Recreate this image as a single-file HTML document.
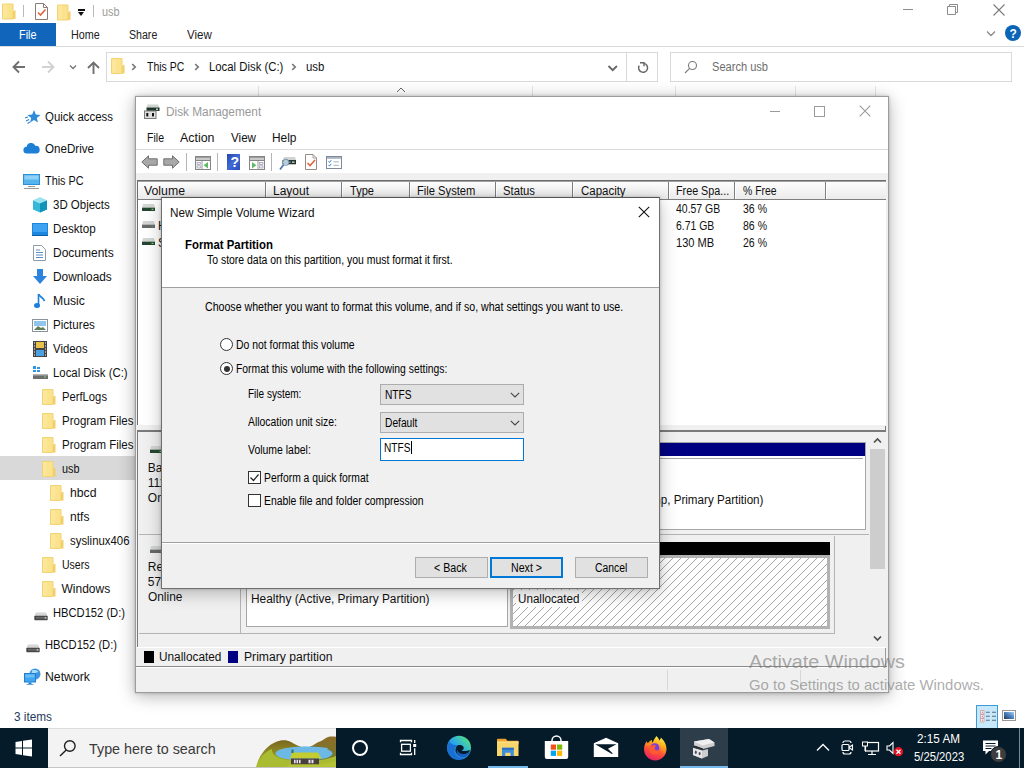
<!DOCTYPE html>
<html lang="en"><head><meta charset="utf-8"><title>usb</title>
<style>
html,body{margin:0;padding:0;width:1024px;height:768px;overflow:hidden;background:#fff;font-family:"Liberation Sans",sans-serif;}
.t{position:absolute;white-space:pre;line-height:1;}
.a{position:absolute;}
#explorer{position:absolute;left:0;top:0;width:1024px;height:728px;background:#fff;overflow:hidden;}

</style></head>
<body>
<div id="explorer">
<svg class="a" style="left:2px;top:3px" width="14" height="17" viewBox="0 0 14 16"><path d="M0.5 0.5h10.5v15h-10.5z" fill="#fbe28c" stroke="#f2d273" stroke-width="1"/><path d="M11 8l2.5 -1.5v9h-2.5z" fill="#f1cf6b"/><path d="M1 1h4v14h-4z" fill="#fde9a3" opacity=".6"/></svg>
<div class="a" style="left:23px;top:5px;width:1px;height:12px;background:#b9b9b9"></div>
<svg class="a" style="left:35px;top:3px" width="13" height="17" viewBox="0 0 13 17"><path d="M0.5 0.5h8l4 4v12h-12z" fill="#fff" stroke="#8c7b74"/><path d="M8.5 0.5v4h4" fill="none" stroke="#8c7b74"/><path d="M3 9.5l2.5 2.5l5-5.5" fill="none" stroke="#e0643c" stroke-width="1.6"/></svg>
<svg class="a" style="left:57px;top:4px" width="14" height="17" viewBox="0 0 14 16"><path d="M0.5 0.5h10.5v15h-10.5z" fill="#fbe28c" stroke="#f2d273" stroke-width="1"/><path d="M11 8l2.5 -1.5v9h-2.5z" fill="#f1cf6b"/><path d="M1 1h4v14h-4z" fill="#fde9a3" opacity=".6"/></svg>
<div class="a" style="left:78px;top:9px;width:7px;height:2px;background:#111"></div>
<div class="a" style="left:78px;top:12px;width:0;height:0;border-left:3.5px solid transparent;border-right:3.5px solid transparent;border-top:4px solid #111"></div>
<div class="a" style="left:93px;top:5px;width:1px;height:12px;background:#b9b9b9"></div>
<span class="t" style="left:101.9px;top:6.2px;font-size:12px;color:#9b9b9b;transform:scaleX(0.9040);transform-origin:0 0;">usb</span>
<div class="a" style="left:903px;top:9px;width:10px;height:1px;background:#8c8c8c"></div>
<svg class="a" style="left:947px;top:4px" width="12" height="12" viewBox="0 0 12 12"><path d="M0.5 2.5h8v8h-8z M2.5 2.5v-2h8v8h-2" fill="none" stroke="#8c8c8c"/></svg>
<svg class="a" style="left:993px;top:4px" width="12" height="12" viewBox="0 0 12 12"><path d="M0.5 0.5l11 11M11.5 0.5l-11 11" fill="none" stroke="#7a7a7a" stroke-width="1.1"/></svg>
<div class="a" style="left:0;top:23px;width:56px;height:23px;background:#1166bb"></div>
<span class="t" style="left:19.4px;top:29.2px;font-size:12px;color:#fff;transform:scaleX(0.9047);transform-origin:0 0;">File</span>
<span class="t" style="left:70.6px;top:29.2px;font-size:12px;color:#222;transform:scaleX(0.8996);transform-origin:0 0;">Home</span>
<span class="t" style="left:129.3px;top:29.2px;font-size:12px;color:#222;transform:scaleX(0.8835);transform-origin:0 0;">Share</span>
<span class="t" style="left:187.3px;top:29.2px;font-size:12px;color:#222;transform:scaleX(0.9614);transform-origin:0 0;">View</span>
<div class="a" style="left:0;top:46px;width:1024px;height:1px;background:#dadbdc"></div>
<svg class="a" style="left:986px;top:30px" width="10" height="7" viewBox="0 0 10 7"><path d="M1 1.5l4 4l4-4" fill="none" stroke="#8a8a8a" stroke-width="1.3"/></svg>
<div class="a" style="left:1005px;top:25px;width:16px;height:16px;border-radius:8px;background:#0a64b8"></div>
<span class="t" style="left:1009.5px;top:28.2px;font-size:12px;color:#fff;font-weight:700;">?</span>
<svg class="a" style="left:12px;top:60px" width="14" height="14" viewBox="0 0 14 14"><path d="M13 7H2M7 1.500L1.500 7L7 12.500" fill="none" stroke="#707070" stroke-width="1.900"/></svg>
<svg class="a" style="left:41px;top:60px" width="14" height="14" viewBox="0 0 14 14"><path d="M1 7H12M7 1.500L12.500 7L7 12.500" fill="none" stroke="#d2d2d2" stroke-width="1.900"/></svg>
<svg class="a" style="left:69px;top:64px" width="8" height="6" viewBox="0 0 8 6"><path d="M1 1.5l3 3l3-3" fill="none" stroke="#777" stroke-width="1.3"/></svg>
<svg class="a" style="left:87px;top:61px" width="13" height="14" viewBox="0 0 13 14"><path d="M6.500 13V2M1 7L6.500 1.500L12 7" fill="none" stroke="#707070" stroke-width="1.900"/></svg>
<div class="a" style="left:106px;top:52px;width:550px;height:28px;border:1px solid #d9d9d9;background:#fff"></div>
<svg class="a" style="left:111px;top:58px" width="14" height="16" viewBox="0 0 14 16"><path d="M0.5 0.5h10.5v15h-10.5z" fill="#fbe28c" stroke="#f2d273" stroke-width="1"/><path d="M11 8l2.5 -1.5v9h-2.5z" fill="#f1cf6b"/><path d="M1 1h4v14h-4z" fill="#fde9a3" opacity=".6"/></svg>
<svg class="a" style="left:130.5px;top:63px" width="6" height="8" viewBox="0 0 6 8"><path d="M1.200 1l3 3l-3 3" fill="none" stroke="#777" stroke-width="1.700"/></svg>
<svg class="a" style="left:193.5px;top:63px" width="6" height="8" viewBox="0 0 6 8"><path d="M1.200 1l3 3l-3 3" fill="none" stroke="#777" stroke-width="1.700"/></svg>
<svg class="a" style="left:291px;top:63px" width="6" height="8" viewBox="0 0 6 8"><path d="M1.200 1l3 3l-3 3" fill="none" stroke="#777" stroke-width="1.700"/></svg>
<span class="t" style="left:147.0px;top:61.2px;font-size:12px;color:#111;transform:scaleX(0.8738);transform-origin:0 0;">This PC</span>
<span class="t" style="left:208.5px;top:61.2px;font-size:12px;color:#111;transform:scaleX(0.9455);transform-origin:0 0;">Local Disk (C:)</span>
<span class="t" style="left:306.0px;top:61.2px;font-size:12px;color:#111;transform:scaleX(0.9504);transform-origin:0 0;">usb</span>
<svg class="a" style="left:607px;top:64px" width="12" height="8" viewBox="0 0 12 8"><path d="M1.500 2l4.200 4.200l4.200-4.200" fill="none" stroke="#666" stroke-width="1.800"/></svg>
<div class="a" style="left:626px;top:53px;width:1px;height:28px;background:#d9d9d9"></div>
<svg class="a" style="left:636px;top:60px" width="14" height="14" viewBox="0 0 14 14"><path d="M7.840 3.370A4.500 4.500 0 1 1 3.160 5.550" fill="none" stroke="#666" stroke-width="1.500"/><path d="M4 2.700H8V6.200" fill="none" stroke="#666" stroke-width="1.400"/></svg>
<div class="a" style="left:670px;top:52px;width:340px;height:28px;border:1px solid #d9d9d9;background:#fff"></div>
<svg class="a" style="left:684px;top:60px" width="14" height="14" viewBox="0 0 14 14"><circle cx="8.5" cy="5.5" r="4" fill="none" stroke="#7a7a7a" stroke-width="1.1"/><path d="M5.6 8.4L1 13" stroke="#7a7a7a" stroke-width="1.1"/></svg>
<span class="t" style="left:711.6px;top:61.2px;font-size:12px;color:#6d6d6d;transform:scaleX(0.9225);transform-origin:0 0;">Search usb</span>
<div class="a" style="left:258px;top:86px;width:1px;height:12px;background:#e5e5e5"></div>
<div class="a" style="left:532px;top:86px;width:1px;height:12px;background:#e5e5e5"></div>
<div class="a" style="left:675px;top:86px;width:1px;height:12px;background:#e5e5e5"></div>
<div class="a" style="left:795px;top:86px;width:1px;height:12px;background:#e5e5e5"></div>
<div class="a" style="left:875px;top:86px;width:1px;height:12px;background:#e5e5e5"></div>
<svg class="a" style="left:396px;top:87px" width="10" height="6" viewBox="0 0 10 6"><path d="M1 5l4-4l4 4" fill="none" stroke="#666" stroke-width="1"/></svg>
<div class="a" style="left:0;top:456px;width:136px;height:24px;background:#d9d9d9"></div>
<span class="t" style="left:45.0px;top:111.2px;font-size:12px;color:#111;transform:scaleX(0.9529);transform-origin:0 0;">Quick access</span>
<svg class="a" style="left:25px;top:109px" width="16" height="16" viewBox="0 0 16 16"><path d="M9 1l1.8 4.6l4.7.3l-3.7 3l1.2 4.7L9 11l-4 2.6l1.2-4.7l-3.7-3l4.7-.3z" fill="#2f8ad8"/><path d="M0 9l3-1M1 12l3-1.5M2.5 14.5l2.5-1.5" stroke="#2f8ad8" stroke-width="1.2"/></svg>
<span class="t" style="left:45.0px;top:143.2px;font-size:12px;color:#111;transform:scaleX(0.9667);transform-origin:0 0;">OneDrive</span>
<svg class="a" style="left:23px;top:143px" width="17" height="11" viewBox="0 0 17 11"><path d="M4 10.5a3.4 3.4 0 0 1-.4-6.8A4.6 4.6 0 0 1 12.300 2.700A3.900 3.900 0 0 1 13.200 10.500z" fill="#1e7fd6"/></svg>
<span class="t" style="left:45.0px;top:175.2px;font-size:12px;color:#111;transform:scaleX(0.9042);transform-origin:0 0;">This PC</span>
<svg class="a" style="left:23px;top:174px" width="17" height="15" viewBox="0 0 17 15"><rect x=".5" y=".5" width="16" height="10" fill="#55b4ee" stroke="#2d8fd4"/><rect x="1.500" y="1.500" width="14" height="4" fill="#8fd0f6"/><rect x="5" y="12" width="7" height="1" fill="#9a9a9a"/><rect x="1" y="14" width="15" height="1" fill="#9a9a9a"/></svg>
<span class="t" style="left:53.0px;top:199.2px;font-size:12px;color:#111;transform:scaleX(0.9569);transform-origin:0 0;">3D Objects</span>
<svg class="a" style="left:32px;top:197px" width="16" height="16" viewBox="0 0 16 16"><path d="M8 0.500l7 3v9l-7 3l-7-3v-9z" fill="#35b8d8"/><path d="M8 0.500l7 3l-7 3l-7-3z" fill="#9be4ef"/><path d="M8 6.500l7-3v9l-7 3z" fill="#1493b8"/></svg>
<span class="t" style="left:53.0px;top:223.2px;font-size:12px;color:#111;transform:scaleX(0.9698);transform-origin:0 0;">Desktop</span>
<svg class="a" style="left:32px;top:223px" width="16" height="13" viewBox="0 0 16 13"><rect x="0" y="0" width="16" height="12" fill="#1a86de"/><rect x="1" y="1" width="14" height="8" fill="#3ea2f0"/><rect x="0" y="12" width="16" height="1" fill="#0c5fa8"/></svg>
<span class="t" style="left:53.0px;top:247.2px;font-size:12px;color:#111;">Documents</span>
<svg class="a" style="left:33px;top:245px" width="13" height="16" viewBox="0 0 13 16"><path d="M.5.500h8l4 4v11h-12z" fill="#fff" stroke="#8e9aa6"/><path d="M3 5h4M3 7.500h7M3 10h7M3 12.500h7" stroke="#5b8fc4" stroke-width="1"/></svg>
<span class="t" style="left:53.0px;top:271.2px;font-size:12px;color:#111;transform:scaleX(0.9903);transform-origin:0 0;">Downloads</span>
<svg class="a" style="left:32px;top:269px" width="16" height="16" viewBox="0 0 16 16"><path d="M5 0h6v7h4l-7 8l-7-8h4z" fill="#2c84dc"/></svg>
<span class="t" style="left:53.0px;top:295.2px;font-size:12px;color:#111;transform:scaleX(1.0146);transform-origin:0 0;">Music</span>
<svg class="a" style="left:34px;top:293px" width="12" height="16" viewBox="0 0 12 16"><path d="M4.500 1v11" stroke="#1d7fd8" stroke-width="1.600"/><path d="M4.500 1c1 3 5 3 6 7" fill="none" stroke="#1d7fd8" stroke-width="1.800"/><ellipse cx="3" cy="12.500" rx="3" ry="2.500" fill="#1d7fd8"/></svg>
<span class="t" style="left:53.0px;top:319.2px;font-size:12px;color:#111;transform:scaleX(0.9663);transform-origin:0 0;">Pictures</span>
<svg class="a" style="left:32px;top:319px" width="16" height="13" viewBox="0 0 16 13"><rect x=".5" y=".5" width="15" height="12" fill="#fff" stroke="#8a949e"/><rect x="2" y="2" width="12" height="5" fill="#8fc6ee"/><path d="M2 11l4-4l3 2l2-1l3 3z" fill="#5c7f5a"/></svg>
<span class="t" style="left:53.0px;top:343.2px;font-size:12px;color:#111;transform:scaleX(0.9484);transform-origin:0 0;">Videos</span>
<svg class="a" style="left:33px;top:341px" width="14" height="16" viewBox="0 0 14 16"><rect x="0" y="0" width="14" height="16" fill="#444"/><rect x="3" y="1" width="8" height="6" fill="#e8c04a"/><rect x="3" y="9" width="8" height="6" fill="#4aa0e0"/><path d="M1 2h1M1 5h1M1 8h1M1 11h1M1 14h1M12 2h1M12 5h1M12 8h1M12 11h1M12 14h1" stroke="#fff"/></svg>
<span class="t" style="left:53.0px;top:367.2px;font-size:12px;color:#111;transform:scaleX(0.9481);transform-origin:0 0;">Local Disk (C:)</span>
<svg class="a" style="left:32px;top:366px" width="16" height="14" viewBox="0 0 16 14"><path d="M1 0h3v3h-3zM5 1h3v2h-3zM1 4h3v2h-3zM5 4h3v2h-3z" fill="#2f96e6"/><rect x="1" y="8" width="15" height="5" fill="#6d6d6d"/><rect x="1" y="8" width="15" height="1.500" fill="#b5b5b5"/><rect x="12" y="10.500" width="2" height="1" fill="#6fe06f"/></svg>
<span class="t" style="left:61.5px;top:391.2px;font-size:12px;color:#111;transform:scaleX(0.9369);transform-origin:0 0;">PerfLogs</span>
<svg class="a" style="left:42.0px;top:389px" width="14" height="16" viewBox="0 0 14 16"><path d="M0.5 0.5h10.5v15h-10.5z" fill="#fbe28c" stroke="#f2d273" stroke-width="1"/><path d="M11 8l2.5 -1.5v9h-2.5z" fill="#f1cf6b"/><path d="M1 1h4v14h-4z" fill="#fde9a3" opacity=".6"/></svg>
<span class="t" style="left:61.5px;top:415.2px;font-size:12px;color:#111;transform:scaleX(0.9573);transform-origin:0 0;">Program Files</span>
<svg class="a" style="left:42.0px;top:413px" width="14" height="16" viewBox="0 0 14 16"><path d="M0.5 0.5h10.5v15h-10.5z" fill="#fbe28c" stroke="#f2d273" stroke-width="1"/><path d="M11 8l2.5 -1.5v9h-2.5z" fill="#f1cf6b"/><path d="M1 1h4v14h-4z" fill="#fde9a3" opacity=".6"/></svg>
<span class="t" style="left:61.5px;top:439.2px;font-size:12px;color:#111;transform:scaleX(0.9573);transform-origin:0 0;">Program Files</span>
<svg class="a" style="left:42.0px;top:437px" width="14" height="16" viewBox="0 0 14 16"><path d="M0.5 0.5h10.5v15h-10.5z" fill="#fbe28c" stroke="#f2d273" stroke-width="1"/><path d="M11 8l2.5 -1.5v9h-2.5z" fill="#f1cf6b"/><path d="M1 1h4v14h-4z" fill="#fde9a3" opacity=".6"/></svg>
<span class="t" style="left:61.5px;top:463.2px;font-size:12px;color:#111;transform:scaleX(0.9040);transform-origin:0 0;">usb</span>
<svg class="a" style="left:42.0px;top:461px" width="14" height="16" viewBox="0 0 14 16"><path d="M0.5 0.5h10.5v15h-10.5z" fill="#fbe28c" stroke="#f2d273" stroke-width="1"/><path d="M11 8l2.5 -1.5v9h-2.5z" fill="#f1cf6b"/><path d="M1 1h4v14h-4z" fill="#fde9a3" opacity=".6"/></svg>
<span class="t" style="left:69.5px;top:487.2px;font-size:12px;color:#111;transform:scaleX(1.0180);transform-origin:0 0;">hbcd</span>
<svg class="a" style="left:50.0px;top:485px" width="14" height="16" viewBox="0 0 14 16"><path d="M0.5 0.5h10.5v15h-10.5z" fill="#fbe28c" stroke="#f2d273" stroke-width="1"/><path d="M11 8l2.5 -1.5v9h-2.5z" fill="#f1cf6b"/><path d="M1 1h4v14h-4z" fill="#fde9a3" opacity=".6"/></svg>
<span class="t" style="left:69.5px;top:511.2px;font-size:12px;color:#111;transform:scaleX(1.0081);transform-origin:0 0;">ntfs</span>
<svg class="a" style="left:50.0px;top:509px" width="14" height="16" viewBox="0 0 14 16"><path d="M0.5 0.5h10.5v15h-10.5z" fill="#fbe28c" stroke="#f2d273" stroke-width="1"/><path d="M11 8l2.5 -1.5v9h-2.5z" fill="#f1cf6b"/><path d="M1 1h4v14h-4z" fill="#fde9a3" opacity=".6"/></svg>
<span class="t" style="left:69.5px;top:535.2px;font-size:12px;color:#111;transform:scaleX(0.9489);transform-origin:0 0;">syslinux406</span>
<svg class="a" style="left:50.0px;top:533px" width="14" height="16" viewBox="0 0 14 16"><path d="M0.5 0.5h10.5v15h-10.5z" fill="#fbe28c" stroke="#f2d273" stroke-width="1"/><path d="M11 8l2.5 -1.5v9h-2.5z" fill="#f1cf6b"/><path d="M1 1h4v14h-4z" fill="#fde9a3" opacity=".6"/></svg>
<span class="t" style="left:61.5px;top:559.2px;font-size:12px;color:#111;transform:scaleX(0.8774);transform-origin:0 0;">Users</span>
<svg class="a" style="left:42.0px;top:557px" width="14" height="16" viewBox="0 0 14 16"><path d="M0.5 0.5h10.5v15h-10.5z" fill="#fbe28c" stroke="#f2d273" stroke-width="1"/><path d="M11 8l2.5 -1.5v9h-2.5z" fill="#f1cf6b"/><path d="M1 1h4v14h-4z" fill="#fde9a3" opacity=".6"/></svg>
<span class="t" style="left:61.5px;top:583.2px;font-size:12px;color:#111;">Windows</span>
<svg class="a" style="left:42.0px;top:581px" width="14" height="16" viewBox="0 0 14 16"><path d="M0.5 0.5h10.5v15h-10.5z" fill="#fbe28c" stroke="#f2d273" stroke-width="1"/><path d="M11 8l2.5 -1.5v9h-2.5z" fill="#f1cf6b"/><path d="M1 1h4v14h-4z" fill="#fde9a3" opacity=".6"/></svg>
<span class="t" style="left:53.0px;top:607.2px;font-size:12px;color:#111;transform:scaleX(0.9307);transform-origin:0 0;">HBCD152 (D:)</span>
<svg class="a" style="left:33.5px;top:611.5px" width="14" height="9" viewBox="0 0 14 9"><path d="M2 .5h10l1.500 3.500h-13z" fill="#d6d6d6"/><rect x=".3" y="3.800" width="13.400" height="4.400" rx=".8" fill="#484848"/><rect x="2" y="5.500" width="8" height=".8" fill="#8a8a8a"/><rect x="10.500" y="5.300" width="2" height="1.200" fill="#f0f0f0"/></svg>
<span class="t" style="left:45.0px;top:639.2px;font-size:12px;color:#111;transform:scaleX(0.9307);transform-origin:0 0;">HBCD152 (D:)</span>
<svg class="a" style="left:25.5px;top:643.5px" width="14" height="9" viewBox="0 0 14 9"><path d="M2 .5h10l1.500 3.500h-13z" fill="#d6d6d6"/><rect x=".3" y="3.800" width="13.400" height="4.400" rx=".8" fill="#484848"/><rect x="2" y="5.500" width="8" height=".8" fill="#8a8a8a"/><rect x="10.500" y="5.300" width="2" height="1.200" fill="#f0f0f0"/></svg>
<span class="t" style="left:45.0px;top:671.2px;font-size:12px;color:#111;transform:scaleX(1.0224);transform-origin:0 0;">Network</span>
<svg class="a" style="left:24px;top:668px" width="17" height="18" viewBox="0 0 17 18"><circle cx="11" cy="6" r="5.500" fill="#3f95e0"/><path d="M8 2.500c2-1 5-.5 6.500 1.500c-2 0-3 1-3.500 2.500c-1-.5-2.500-.5-3.500 0z" fill="#a8dcf8"/><rect x=".5" y="5.500" width="11" height="8.500" fill="#42a5f0" stroke="#1e7fd0"/><rect x="1.500" y="6.500" width="9" height="3" fill="#6cc0fa"/><rect x="4.500" y="14.500" width="3" height="1.500" fill="#1e7fd0"/><rect x="2.500" y="16" width="7" height="1" fill="#6aa8d8"/></svg>
<span class="t" style="left:14.0px;top:711.2px;font-size:12px;color:#1e395b;transform:scaleX(0.9822);transform-origin:0 0;">3 items</span>
<div class="a" style="left:976px;top:705px;width:20px;height:24px;border:1px solid #3d9bd9;background:#c7e7fb"></div>
<svg class="a" style="left:980px;top:710px" width="17" height="13" viewBox="0 0 17 13"><path d="M.5.500h3.500v3.500H.5zM.5 4.500h3.500v3.500H.5zM.5 8.500h3.500v3.500H.5z" fill="#fff" stroke="#c98a90" stroke-width=".7"/><path d="M1.800 2.200h1M1.800 6.200h1" stroke="#556" stroke-width="1"/><path d="M1.800 10.200h1" stroke="#c03030" stroke-width="1"/><path d="M6 2.200h3.700M12 2.200h4M6 6.200h3.700M12 6.200h4M6 10.200h3.700M12 10.200h4" stroke="#5b6b7a" stroke-width="1.100"/></svg>
<svg class="a" style="left:1002px;top:710px" width="14" height="11" viewBox="0 0 14 11"><linearGradient id="tg" x1="0" y1="1" x2="1" y2="0"><stop offset="0" stop-color="#233a5c"/><stop offset=".55" stop-color="#4f86c4"/><stop offset="1" stop-color="#a9d0f2"/></linearGradient><rect x=".5" y=".5" width="13" height="10" fill="#fff" stroke="#9d9494"/><rect x="2" y="2" width="10" height="7" fill="url(#tg)"/></svg>
</div><div id="dm" class="a" style="left:135px;top:96px;width:752px;height:595px;border:1px solid #9c9c9c;background:#f0f0f0;box-shadow:0 0 3px rgba(0,0,0,.22),0 3px 16px rgba(0,0,0,.3)"></div>
<div class="a" style="left:136px;top:97px;width:752px;height:76px;background:#fff"></div>
<div class="a" style="left:136px;top:149px;width:752px;height:1px;background:#dcdcdc"></div>
<svg class="a" style="left:144px;top:104px" width="16" height="15" viewBox="0 0 16 15"><path d="M3.500.5h10.500l1.500 3h-13z" fill="#cdd5d0"/><rect x="2.500" y="3.500" width="13" height="3.400" fill="#22332c"/><rect x="12" y="4.600" width="2" height="1.200" fill="#d8f0e0"/><rect x=".5" y="7" width="11.500" height="7.500" fill="#dedede" stroke="#7a7a7a"/><rect x="2.300" y="9" width="2" height="3.400" fill="#111"/><rect x="8" y="9" width="2" height="3.400" fill="#111"/></svg>
<span class="t" style="left:165.9px;top:106.2px;font-size:12px;color:#999;transform:scaleX(0.9843);transform-origin:0 0;">Disk Management</span>
<div class="a" style="left:770px;top:111px;width:10px;height:1px;background:#9a9a9a"></div>
<div class="a" style="left:814px;top:106px;width:9px;height:9px;border:1px solid #9a9a9a"></div>
<svg class="a" style="left:859px;top:105px" width="12" height="12" viewBox="0 0 12 12"><path d="M.7.700l10.600 10.600M11.300.700L.7 11.300" fill="none" stroke="#9a9a9a" stroke-width="1.100"/></svg>
<span class="t" style="left:146.5px;top:132.2px;font-size:12px;color:#111;transform:scaleX(0.8788);transform-origin:0 0;">File</span>
<span class="t" style="left:180.0px;top:132.2px;font-size:12px;color:#111;transform:scaleX(1.0342);transform-origin:0 0;">Action</span>
<span class="t" style="left:231.0px;top:132.2px;font-size:12px;color:#111;transform:scaleX(0.9691);transform-origin:0 0;">View</span>
<span class="t" style="left:272.0px;top:132.2px;font-size:12px;color:#111;transform:scaleX(0.9924);transform-origin:0 0;">Help</span>
<svg class="a" style="left:141px;top:155px" width="17" height="14" viewBox="0 0 17 14"><path d="M0.800 7L7.500.8v3h8.700v6.400h-8.700v3z" fill="#a8a8a8" stroke="#6f6f6f" stroke-width="1"/></svg>
<svg class="a" style="left:163px;top:155px" width="17" height="14" viewBox="0 0 17 14"><path d="M16.200 7L9.500.8v3h-8.700v6.400h8.700v3z" fill="#a8a8a8" stroke="#6f6f6f" stroke-width="1"/></svg>
<div class="a" style="left:186px;top:153px;width:1px;height:18px;background:#b5b5b5"></div>
<div class="a" style="left:217px;top:153px;width:1px;height:18px;background:#b5b5b5"></div>
<div class="a" style="left:271px;top:153px;width:1px;height:18px;background:#b5b5b5"></div>
<svg class="a" style="left:195px;top:156px" width="16" height="14" viewBox="0 0 16 14"><rect x=".5" y=".5" width="15" height="13" fill="#fff" stroke="#858585"/><rect x="1" y="1" width="14" height="1.500" fill="#9c9c9c"/><rect x="1" y="2.500" width="14" height="1.500" fill="#c9c9c9"/><path d="M1 4.500h14" stroke="#858585"/><path d="M7 5v8.500" stroke="#9a9a9a"/><rect x="2" y="6.300" width="3.500" height="2.200" fill="#eef" stroke="#8d8d9a" stroke-width=".6"/><rect x="2" y="9.800" width="3.500" height="2.200" fill="#eef" stroke="#8d8d9a" stroke-width=".6"/><path d="M13 6v6.500l-4.500-3.250z" fill="#63b866"/></svg>
<svg class="a" style="left:227px;top:154px" width="13" height="16" viewBox="0 0 13 16"><linearGradient id="hg" x1="0" y1="0" x2="1" y2="1"><stop offset="0" stop-color="#2747a8"/><stop offset=".5" stop-color="#3f6ad8"/><stop offset="1" stop-color="#2a4db8"/></linearGradient><rect x="0" y="0" width="13" height="16" fill="url(#hg)"/></svg>
<span class="t" style="left:230.4px;top:155.1px;font-size:14px;color:#fff;font-weight:700;">?</span>
<svg class="a" style="left:249px;top:156px" width="16" height="14" viewBox="0 0 16 14"><rect x=".5" y=".5" width="15" height="13" fill="#fff" stroke="#858585"/><rect x="1" y="1" width="14" height="1.500" fill="#9c9c9c"/><rect x="1" y="2.500" width="14" height="1.500" fill="#c9c9c9"/><path d="M1 4.500h14" stroke="#858585"/><path d="M9 5v8.500" stroke="#9a9a9a"/><rect x="10.500" y="6.300" width="3.500" height="2.200" fill="#eef" stroke="#8d8d9a" stroke-width=".6"/><rect x="10.500" y="9.800" width="3.500" height="2.200" fill="#eef" stroke="#8d8d9a" stroke-width=".6"/><path d="M3 6v6.500l4.500-3.250z" fill="#63b866"/></svg>
<svg class="a" style="left:279px;top:156px" width="17" height="15" viewBox="0 0 17 15"><path d="M5 1h11l1 3h-13z" fill="#cfd3d1"/><rect x="3.500" y="4" width="13.500" height="4.300" fill="#27352e"/><rect x="9" y="5.500" width="3" height="1.300" fill="#6a8a9a"/><rect x="13" y="5.500" width="2.500" height="1.300" fill="#bfe8c8"/><circle cx="6.800" cy="6.300" r="3.100" fill="#cfe6f7" fill-opacity=".85" stroke="#6a8aac" stroke-width=".9"/><path d="M4.600 8.700L1 13.500" stroke="#4a76b0" stroke-width="1.700"/></svg>
<svg class="a" style="left:305px;top:154px" width="12" height="16" viewBox="0 0 12 16"><path d="M.5.500h7.500l3.500 3.500v11.500h-11z" fill="#fff" stroke="#9a8a84"/><path d="M8 .5v3.500h3.500" fill="none" stroke="#9a8a84" stroke-width=".8"/><path d="M2.500 9l2.500 2.500l5-5.500" fill="none" stroke="#e0643c" stroke-width="1.600"/></svg>
<svg class="a" style="left:326px;top:156px" width="16" height="13" viewBox="0 0 16 13"><rect x=".5" y=".5" width="15" height="12" fill="#fff" stroke="#7f8a96"/><rect x="1" y="1" width="14" height="1.800" fill="#a9b4c0"/><path d="M2.500 5.300l1 1.200l1.700-2.300M2.500 8.900l1 1.200l1.700-2.300" fill="none" stroke="#2f7fd0" stroke-width="1"/><path d="M7.500 5.800h5.500M7.500 9.300h5.500" stroke="#aab4be"/></svg>
<div class="a" style="left:137px;top:180px;width:749px;height:245px;background:#fff;border-top:1px solid #6d6d6d;border-left:1px solid #6d6d6d;box-sizing:border-box"></div>
<div class="a" style="left:138px;top:181px;width:748px;height:19px;background:linear-gradient(#fdfdfd,#ebebeb);border-top:1px solid #a0a0a0;border-bottom:1px solid #7e7e7e;box-sizing:border-box"></div>
<div class="a" style="left:265px;top:182px;width:1px;height:17px;background:#7e7e7e;border-right:1px solid #fff"></div>
<div class="a" style="left:341px;top:182px;width:1px;height:17px;background:#7e7e7e;border-right:1px solid #fff"></div>
<div class="a" style="left:409px;top:182px;width:1px;height:17px;background:#7e7e7e;border-right:1px solid #fff"></div>
<div class="a" style="left:495px;top:182px;width:1px;height:17px;background:#7e7e7e;border-right:1px solid #fff"></div>
<div class="a" style="left:572px;top:182px;width:1px;height:17px;background:#7e7e7e;border-right:1px solid #fff"></div>
<div class="a" style="left:668px;top:182px;width:1px;height:17px;background:#7e7e7e;border-right:1px solid #fff"></div>
<div class="a" style="left:734px;top:182px;width:1px;height:17px;background:#7e7e7e;border-right:1px solid #fff"></div>
<div class="a" style="left:825px;top:182px;width:1px;height:17px;background:#7e7e7e;border-right:1px solid #fff"></div>
<span class="t" style="left:144.0px;top:185.2px;font-size:12px;color:#111;transform:scaleX(1.0242);transform-origin:0 0;">Volume</span>
<span class="t" style="left:273.0px;top:185.2px;font-size:12px;color:#111;">Layout</span>
<span class="t" style="left:350.0px;top:185.2px;font-size:12px;color:#111;transform:scaleX(0.9225);transform-origin:0 0;">Type</span>
<span class="t" style="left:417.2px;top:185.2px;font-size:12px;color:#111;transform:scaleX(0.9316);transform-origin:0 0;">File System</span>
<span class="t" style="left:503.0px;top:185.2px;font-size:12px;color:#111;transform:scaleX(0.9403);transform-origin:0 0;">Status</span>
<span class="t" style="left:581.0px;top:185.2px;font-size:12px;color:#111;transform:scaleX(0.9553);transform-origin:0 0;">Capacity</span>
<span class="t" style="left:676.2px;top:185.2px;font-size:12px;color:#111;transform:scaleX(0.8960);transform-origin:0 0;">Free Spa...</span>
<span class="t" style="left:743.4px;top:185.2px;font-size:12px;color:#111;transform:scaleX(0.8659);transform-origin:0 0;">% Free</span>
<svg class="a" style="left:142px;top:204px" width="13" height="7" viewBox="0 0 13 7"><path d="M1 0h11l1 4h-13z" fill="#d3d6d3"/><rect x="0" y="3.700" width="13" height="3.300" fill="#24472f"/><rect x="9.500" y="4.800" width="2" height="1" fill="#8fe89a"/></svg>
<span class="t" style="left:158.0px;top:203.2px;font-size:12px;color:#111;">  (C:)</span>
<span class="t" style="left:676.2px;top:203.2px;font-size:12px;color:#111;transform:scaleX(0.8717);transform-origin:0 0;">40.57 GB</span>
<span class="t" style="left:742.8px;top:203.2px;font-size:12px;color:#111;transform:scaleX(0.8772);transform-origin:0 0;">36 %</span>
<svg class="a" style="left:142px;top:221px" width="13" height="7" viewBox="0 0 13 7"><path d="M1 0h11l1 4h-13z" fill="#d3d6d3"/><rect x="0" y="3.700" width="13" height="3.300" fill="#666a68"/><rect x="9.500" y="4.800" width="2" height="1" fill="#888"/></svg>
<span class="t" style="left:158.0px;top:220.2px;font-size:12px;color:#111;">HBCD152 (D:)</span>
<span class="t" style="left:676.2px;top:220.2px;font-size:12px;color:#111;transform:scaleX(0.8676);transform-origin:0 0;">6.71 GB</span>
<span class="t" style="left:742.8px;top:220.2px;font-size:12px;color:#111;transform:scaleX(0.8772);transform-origin:0 0;">86 %</span>
<svg class="a" style="left:142px;top:238px" width="13" height="7" viewBox="0 0 13 7"><path d="M1 0h11l1 4h-13z" fill="#d3d6d3"/><rect x="0" y="3.700" width="13" height="3.300" fill="#24472f"/><rect x="9.500" y="4.800" width="2" height="1" fill="#8fe89a"/></svg>
<span class="t" style="left:158.0px;top:237.2px;font-size:12px;color:#111;">System Reserved</span>
<span class="t" style="left:676.2px;top:237.2px;font-size:12px;color:#111;transform:scaleX(0.9236);transform-origin:0 0;">130 MB</span>
<span class="t" style="left:742.8px;top:237.2px;font-size:12px;color:#111;transform:scaleX(0.8772);transform-origin:0 0;">26 %</span>
<div class="a" style="left:137px;top:430px;width:749px;height:2px;background:#7a7a7a"></div>
<div class="a" style="left:885px;top:426px;width:1px;height:5px;background:#7a7a7a"></div>
<div class="a" style="left:137px;top:430px;width:1px;height:217px;background:#7a7a7a"></div>
<div class="a" style="left:139px;top:434px;width:101px;height:100px;border-right:1px solid #b4b4b4;border-bottom:1px solid #b4b4b4;background:#f0f0f0"></div>
<svg class="a" style="left:150px;top:446px" width="13" height="7" viewBox="0 0 13 7"><path d="M1 0h11l1 4h-13z" fill="#d3d6d3"/><rect x="0" y="3.700" width="13" height="3.300" fill="#24472f"/><rect x="9.500" y="4.800" width="2" height="1" fill="#8fe89a"/></svg>
<span class="t" style="left:147.8px;top:462.2px;font-size:12px;color:#111;">Basic</span>
<span class="t" style="left:147.8px;top:477.2px;font-size:12px;color:#111;">111.79 GB</span>
<span class="t" style="left:147.8px;top:492.2px;font-size:12px;color:#111;">Online</span>
<div class="a" style="left:246px;top:442px;width:620px;height:88px;background:#fff;border:1px solid #a6a6a6;box-sizing:border-box"></div>
<div class="a" style="left:246px;top:443px;width:619px;height:13px;background:#000082"></div>
<div class="a" style="left:247px;top:458px;width:616px;height:1px;background:#a6a6a6"></div>
<span class="t" style="left:460.2px;top:494.2px;font-size:12px;color:#111;transform:scaleX(0.9688);transform-origin:100% 0;">Healthy (Boot, Page File, Crash Dump, Primary Partition)</span>
<div class="a" style="left:139px;top:534px;width:730px;height:1px;background:#b4b4b4"></div>
<div class="a" style="left:139px;top:536px;width:101px;height:97px;border-right:1px solid #b4b4b4;border-bottom:1px solid #b4b4b4;background:#f0f0f0"></div>
<svg class="a" style="left:150px;top:545.5px" width="13" height="7" viewBox="0 0 13 7"><path d="M1 0h11l1 4h-13z" fill="#d3d6d3"/><rect x="0" y="3.700" width="13" height="3.300" fill="#666a68"/><rect x="9.500" y="4.800" width="2" height="1" fill="#888"/></svg>
<span class="t" style="left:147.8px;top:561.2px;font-size:12px;color:#111;">Removable</span>
<span class="t" style="left:147.8px;top:576.2px;font-size:12px;color:#111;">57.30 GB</span>
<span class="t" style="left:147.8px;top:591.2px;font-size:12px;color:#111;transform:scaleX(0.9917);transform-origin:0 0;">Online</span>
<div class="a" style="left:241px;top:536px;width:594px;height:98px;border-right:1px solid #b4b4b4;border-bottom:1px solid #b4b4b4;box-sizing:border-box"></div>
<div class="a" style="left:246px;top:542px;width:262px;height:85px;background:#fff;border:1px solid #a6a6a6;box-sizing:border-box"></div>
<div class="a" style="left:246px;top:542px;width:262px;height:13px;background:#000082"></div>
<span class="t" style="left:250.6px;top:593.2px;font-size:12px;color:#111;transform:scaleX(0.9914);transform-origin:0 0;">Healthy (Active, Primary Partition)</span>
<div class="a" style="left:510px;top:542px;width:320px;height:13px;background:#000"></div>
<div class="a" style="left:510px;top:555px;width:320px;height:74px;background:#b2b2b2"></div>
<svg class="a" style="left:513px;top:558px" width="314" height="68" viewBox="0 0 314 68"><pattern id="hatch" width="8" height="8" patternUnits="userSpaceOnUse"><rect width="8" height="8" fill="#fff"/><path d="M-1 9L9 -1M-1 1L1 -1M7 9L9 7" stroke="#747474" stroke-width=".650"/></pattern><rect width="314" height="68" fill="url(#hatch)"/></svg>
<div class="a" style="left:516px;top:590px;width:66px;height:17px;background:#fff"></div>
<span class="t" style="left:517.7px;top:593.2px;font-size:12px;color:#111;transform:scaleX(0.9704);transform-origin:0 0;">Unallocated</span>
<div class="a" style="left:869px;top:432px;width:17px;height:215px;background:#f0f0f0"></div>
<div class="a" style="left:870px;top:449px;width:15px;height:120px;background:#cdcdcd"></div>
<svg class="a" style="left:873px;top:437px" width="9" height="7" viewBox="0 0 9 7"><path d="M1 5.500l3.500-3.500l3.500 3.500" fill="none" stroke="#505050" stroke-width="1.700"/></svg>
<svg class="a" style="left:873px;top:635px" width="9" height="7" viewBox="0 0 9 7"><path d="M1 1.500l3.500 3.500l3.500-3.500" fill="none" stroke="#505050" stroke-width="1.700"/></svg>
<div class="a" style="left:137px;top:647px;width:749px;height:1px;background:#fff"></div>
<div class="a" style="left:144px;top:651px;width:10px;height:12px;background:#000"></div>
<span class="t" style="left:159.0px;top:651.2px;font-size:12px;color:#111;transform:scaleX(0.9846);transform-origin:0 0;">Unallocated</span>
<div class="a" style="left:228px;top:651px;width:10px;height:12px;background:#000082"></div>
<span class="t" style="left:243.5px;top:651.2px;font-size:12px;color:#111;transform:scaleX(1.0131);transform-origin:0 0;">Primary partition</span>
<div class="a" style="left:136px;top:666px;width:751px;height:1px;background:#8a8a8a"></div>
<div class="a" style="left:136px;top:667px;width:751px;height:1px;background:#fff"></div>
<div class="a" style="left:667px;top:670px;width:1px;height:20px;background:#d7d7d7"></div>
<div class="a" style="left:800px;top:670px;width:1px;height:20px;background:#d7d7d7"></div>
<div class="a" style="left:885px;top:648px;width:1px;height:19px;background:#9a9a9a"></div>
<div id="wiz" class="a" style="left:161px;top:197px;width:497px;height:390px;border:1px solid #6f6f6f;border-top-color:#555;background:#f0f0f0;box-shadow:0 0 3px rgba(0,0,0,.2),0 4px 16px rgba(0,0,0,.26)"></div>
<div class="a" style="left:162px;top:198px;width:497px;height:89px;background:#fff"></div>
<div class="a" style="left:162px;top:287px;width:497px;height:1px;background:#a0a0a0"></div>
<span class="t" style="left:170.0px;top:207.2px;font-size:12px;color:#111;transform:scaleX(0.9766);transform-origin:0 0;">New Simple Volume Wizard</span>
<svg class="a" style="left:638px;top:206px" width="12" height="12" viewBox="0 0 12 12"><path d="M.8.800l10.400 10.400M11.200.800L.8 11.200" fill="none" stroke="#111" stroke-width="1.100"/></svg>
<span class="t" style="left:184.7px;top:239.0px;font-size:12px;color:#000;transform:scaleX(0.9485);transform-origin:0 0;font-weight:700;">Format Partition</span>
<span class="t" style="left:207.0px;top:254.0px;font-size:12px;color:#000;transform:scaleX(0.8705);transform-origin:0 0;">To store data on this partition, you must format it first.</span>
<span class="t" style="left:204.5px;top:301.0px;font-size:12px;color:#000;transform:scaleX(0.8843);transform-origin:0 0;">Choose whether you want to format this volume, and if so, what settings you want to use.</span>
<div class="a" style="left:220px;top:338px;width:11px;height:11px;border:1px solid #333;border-radius:50%;background:#fff"></div>
<span class="t" style="left:236.3px;top:339.0px;font-size:12px;color:#000;transform:scaleX(0.8674);transform-origin:0 0;">Do not format this volume</span>
<div class="a" style="left:220px;top:362px;width:11px;height:11px;border:1px solid #333;border-radius:50%;background:#fff"></div>
<div class="a" style="left:223.500px;top:365.500px;width:6px;height:6px;border-radius:50%;background:#333"></div>
<span class="t" style="left:236.3px;top:363.0px;font-size:12px;color:#000;transform:scaleX(0.8632);transform-origin:0 0;">Format this volume with the following settings:</span>
<span class="t" style="left:248.2px;top:388.0px;font-size:12px;color:#000;transform:scaleX(0.8342);transform-origin:0 0;">File system:</span>
<span class="t" style="left:248.2px;top:416.0px;font-size:12px;color:#000;transform:scaleX(0.8644);transform-origin:0 0;">Allocation unit size:</span>
<span class="t" style="left:248.2px;top:444.0px;font-size:12px;color:#000;transform:scaleX(0.8717);transform-origin:0 0;">Volume label:</span>
<div class="a" style="left:380px;top:384px;width:142px;height:19px;border:1px solid #adadad;background:#e1e1e1"></div>
<span class="t" style="left:384.6px;top:389.0px;font-size:12px;color:#000;transform:scaleX(0.8487);transform-origin:0 0;">NTFS</span>
<svg class="a" style="left:510px;top:392px" width="10" height="6" viewBox="0 0 10 6"><path d="M.8.800l4.200 4.200l4.200-4.200" fill="none" stroke="#444" stroke-width="1.100"/></svg>
<div class="a" style="left:380px;top:412px;width:142px;height:19px;border:1px solid #adadad;background:#e1e1e1"></div>
<span class="t" style="left:384.6px;top:417.0px;font-size:12px;color:#000;transform:scaleX(0.8519);transform-origin:0 0;">Default</span>
<svg class="a" style="left:510px;top:420px" width="10" height="6" viewBox="0 0 10 6"><path d="M.8.800l4.200 4.200l4.200-4.200" fill="none" stroke="#444" stroke-width="1.100"/></svg>
<div class="a" style="left:380px;top:438px;width:142px;height:21px;border:1px solid #0078d7;background:#fff"></div>
<span class="t" style="left:383.6px;top:442.0px;font-size:12px;color:#000;transform:scaleX(0.8423);transform-origin:0 0;">NTFS</span>
<div class="a" style="left:411px;top:441px;width:1px;height:13px;background:#000"></div>
<div class="a" style="left:248px;top:471px;width:11px;height:11px;border:1px solid #333;background:#fff"></div>
<svg class="a" style="left:249px;top:472px" width="11" height="11" viewBox="0 0 11 11"><path d="M1.500 5.500l3 3l5-6" fill="none" stroke="#222" stroke-width="1.200"/></svg>
<span class="t" style="left:264.4px;top:472.0px;font-size:12px;color:#000;transform:scaleX(0.8610);transform-origin:0 0;">Perform a quick format</span>
<div class="a" style="left:248px;top:494px;width:11px;height:11px;border:1px solid #333;background:#fff"></div>
<span class="t" style="left:264.4px;top:495.0px;font-size:12px;color:#000;transform:scaleX(0.8669);transform-origin:0 0;">Enable file and folder compression</span>
<div class="a" style="left:162px;top:542px;width:497px;height:1px;background:#a0a0a0"></div>
<div class="a" style="left:162px;top:543px;width:497px;height:1px;background:#fff"></div>
<div class="a" style="left:415px;top:557px;width:71px;height:19px;border:1px solid #adadad;background:#e1e1e1"></div>
<span class="t" style="left:433.6px;top:562.0px;font-size:12px;color:#000;transform:scaleX(0.8857);transform-origin:0 0;">&lt; Back</span>
<div class="a" style="left:490px;top:557px;width:69px;height:17px;border:2px solid #0078d7;background:#e1e1e1"></div>
<span class="t" style="left:511.3px;top:562.0px;font-size:12px;color:#000;transform:scaleX(0.8853);transform-origin:0 0;">Next &gt;</span>
<div class="a" style="left:575px;top:557px;width:71px;height:19px;border:1px solid #adadad;background:#e1e1e1"></div>
<span class="t" style="left:594.7px;top:562.0px;font-size:12px;color:#000;transform:scaleX(0.8646);transform-origin:0 0;">Cancel</span>
<span class="t" style="left:749.0px;top:653.4px;font-size:18px;color:rgba(120,120,120,.62);transform:scaleX(1.0981);transform-origin:0 0;">Activate Windows</span>
<span class="t" style="left:749.0px;top:677.9px;font-size:14.5px;color:rgba(120,120,120,.62);transform:scaleX(1.0267);transform-origin:0 0;">Go to Settings to activate Windows.</span><div id="taskbar" class="a" style="left:0;top:728px;width:1024px;height:40px;background:#051b29"></div>
<svg class="a" style="left:15px;top:739px" width="18" height="18" viewBox="0 0 18 18"><path d="M.5 3L7 2v6.500H.5zM8 1.800L17 .5v8H8zM.5 9.500H7v6.500L.5 15zM8 9.500h9v8L8 16.200z" fill="#fff"/></svg>
<div class="a" style="left:48px;top:728px;width:288px;height:40px;background:#f3f3f3;box-sizing:border-box;border-top:1px solid #dcdcdc;border-bottom:1px solid #c4c4c4;overflow:hidden"><svg class="a" style="left:206px;top:5px" width="82" height="34" viewBox="0 0 82 34"><linearGradient id="lg1" x1="0" y1="0" x2="0" y2="1"><stop offset="0" stop-color="#7a651c"/><stop offset=".45" stop-color="#8f8d26"/><stop offset="1" stop-color="#b9c632"/></linearGradient><linearGradient id="lg2" x1="0" y1="0" x2="0" y2="1"><stop offset="0" stop-color="#8d6c26"/><stop offset=".6" stop-color="#7a7630"/><stop offset="1" stop-color="#5f7f4a"/></linearGradient><path d="M2 34C4 22 13 11 23 7.500c6-2 10-1.500 14 .5c4 2.500 8 4.500 12 5.500l2 3L49 34z" fill="url(#lg1)"/><path d="M56 12.500c4-1 6-4 10-5c3-.8 5-3.500 8-4.500c3-.8 5-.5 8-.3V32L56 28z" fill="url(#lg2)"/><ellipse cx="50" cy="19.500" rx="28.500" ry="7" fill="#6db9e5"/><path d="M40 13.500c8-1.200 24-1.200 34 .5l-2 3H38z" fill="#6db9e5"/><path d="M2 34c2-8 8-16 16-19c-1 6 6 10 18 11.500c14 1.500 34 .5 46-4.500v12z" fill="#a9bb30"/><path d="M38 18.500h26l3.500 6H36z" fill="#c3cc30"/><rect x="37" y="24.500" width="28" height="6" fill="#4a3f3a"/><path d="M40 25.800h1.600v3.400H40zM42.500 25.800h1.600v3.400h-1.600zM45 25.800h1.600v3.400H45zM54.500 25.800h2v3.400h-2zM57.500 25.800h2v3.400h-2z" fill="#e6e2f4"/><rect x="37.500" y="15.500" width="2" height="3.500" fill="#3f6a6a"/><path d="M36 30.500h30l16-3v6.500H30z" fill="#b4c234"/></svg></div>
<svg class="a" style="left:58px;top:738px" width="20" height="20" viewBox="0 0 20 20"><circle cx="11.800" cy="8" r="5.300" fill="none" stroke="#1f1f1f" stroke-width="1.400"/><path d="M8.200 12L2 18" stroke="#1f1f1f" stroke-width="1.400"/></svg>
<span class="t" style="left:88.8px;top:741.1px;font-size:15px;color:#3a3a3a;transform:scaleX(0.9557);transform-origin:0 0;">Type here to search</span>
<div class="a" style="left:352px;top:739.500px;width:12px;height:12px;border:2px solid #fff;border-radius:50%"></div>
<svg class="a" style="left:399px;top:739px" width="18" height="17" viewBox="0 0 18 17"><path d="M1.500 3.300V1.500H12.500V3.300M1.500 13.700V15.500H12.500V13.700" fill="none" stroke="#fff" stroke-width="1.300"/><rect x="2.600" y="5.300" width="8.800" height="6.900" fill="none" stroke="#fff" stroke-width="1.300"/><path d="M15.700 1v3M15.700 9.300v6.700" stroke="#fff" stroke-width="1.300"/><rect x="14.200" y="5" width="3" height="3" fill="#fff"/></svg>
<svg class="a" style="left:446px;top:735px" width="26" height="26" viewBox="0 0 26 26"><linearGradient id="eg1" x1="0" y1="1" x2="1" y2="0"><stop offset="0" stop-color="#1565c6"/><stop offset=".5" stop-color="#2aa7ec"/><stop offset=".8" stop-color="#49d39c"/><stop offset="1" stop-color="#6cdc5a"/></linearGradient><circle cx="13" cy="12.800" r="12" fill="url(#eg1)"/><path d="M3.500 6.500c-3.500 5-2.800 12 2 16c4 3.200 9.500 3 13 .5c-4 .5-8-1-9.500-4.500c-1.400-3.300 0-6.500 2.500-8c-3-1-6.500-.5-8-4z" fill="#1a6fd2"/><path d="M11.500 10.500c2-1 5-.5 6 1.500c.8 1.800-.3 3.300-2 3.500c2 .8 5.500.8 8.500-.5c-1 3-2.500 5-4.500 6.500c-3.500 1-8-.5-9.500-4c-1.200-3 .2-6 1.500-7z" fill="#051b29"/><path d="M19.500 22c2.500-1.500 4.300-4 5-6.500c-1.500 2-4 3.500-7 3.500c-3.500 0-6-2-6.500-4.500c-.8 2.500.5 5.500 3 7c1.800 1 3.800 1.200 5.500.5z" fill="#1760c0"/></svg>
<svg class="a" style="left:496px;top:738px" width="24" height="20" viewBox="0 0 24 20"><path d="M1 1.500a.8.800 0 0 1 .8-.8h8l1.500 2h10.400a.8.800 0 0 1 .8.800v3h-21.500z" fill="#eea52c"/><rect x="1" y="3.600" width="21.500" height="14.400" fill="#f9d66b"/><rect x="1" y="3.600" width="21.500" height="1.200" fill="#fbe08a"/><path d="M6 18v-8.200h11.800V18h-3.300v-3.200H9.300V18z" fill="#3d8fdc"/><rect x="6" y="9.800" width="11.800" height="2" fill="#2b6fc4"/></svg>
<div class="a" style="left:488px;top:766px;width:40px;height:2px;background:#76b9ed"></div>
<svg class="a" style="left:544px;top:735px" width="25" height="25" viewBox="0 0 25 25"><path d="M8 7.500V5.500a4.500 4.500 0 0 1 9 0V7.500" fill="none" stroke="#fff" stroke-width="1.500"/><path d="M.8 6h23.400v16a2 2 0 0 1-2 2H2.800a2 2 0 0 1-2-2z" fill="#fff"/><rect x="6.800" y="9.500" width="5.200" height="5.200" fill="#f25022"/><rect x="13" y="9.500" width="5.200" height="5.200" fill="#7fba00"/><rect x="6.800" y="15.700" width="5.200" height="5.200" fill="#00a4ef"/><rect x="13" y="15.700" width="5.200" height="5.200" fill="#ffb900"/></svg>
<svg class="a" style="left:593px;top:737px" width="26" height="21" viewBox="0 0 26 21"><path d="M.8 6.300L13.100.7L25.200 6.300V20H.8z" fill="#fff"/><path d="M2.200 7.300H23.500L15 11.700L19.800 16.500L18.900 16.900z" fill="#051b29"/></svg>
<svg class="a" style="left:642px;top:734px" width="27" height="28" viewBox="0 0 27 28"><linearGradient id="fg1" x1=".7" y1="0" x2=".3" y2="1"><stop offset="0" stop-color="#fff24a"/><stop offset=".3" stop-color="#ffb01e"/><stop offset=".65" stop-color="#ff4a3a"/><stop offset="1" stop-color="#e6206a"/></linearGradient><path d="M14.500 2c1.500 1.500 2.500 3 2.800 4.500c1-.8 1.500-2 1.500-3c3.500 3 5.700 7 5.700 11.500c0 6.300-5 11.500-11.300 11.500S2 21.300 2 15c0-3.500 1.300-6 3-8c0 1 .3 2 .8 2.800C6.500 8 8 6.500 10 6c-.3 1 0 2 .5 2.800c1-2.500 2.500-5 4-6.800z" fill="url(#fg1)"/><circle cx="12.800" cy="13.800" r="4.600" fill="#7a3ee0"/><path d="M8.500 12c2-1.500 4.500-1.500 6 0c-1 .2-1.800 1-1.800 2.200c0 1.300 1 2.300 2.300 2.300c1.500 0 2.800-1 3.300-2.500c.5 3.500-2 6.500-5.500 6.500c-3.200 0-5.500-2.500-5.500-5.500c0-1.200.5-2.200 1.200-3z" fill="#ff5a30"/><path d="M4 10c1-1 2.500-1.500 4-1.200c-.8.800-1.200 2-1 3.200c-1.200-.3-2.300-1-3-2z" fill="#ff8a1e"/></svg>
<div class="a" style="left:680px;top:728px;width:48px;height:40px;background:#2e3d4a"></div>
<div class="a" style="left:680px;top:766px;width:48px;height:2px;background:#76b9ed"></div>
<svg class="a" style="left:692px;top:738px" width="24" height="22" viewBox="0 0 24 22"><path d="M2 3.500L17 1l5.500 3.500V8L11 11L2 7.500z" fill="#cfcfcf"/><path d="M2 3.500L17 1l5.500 3.500L10.500 7.500z" fill="#efefef"/><path d="M2.500 7.500L11 10.500v1.200L2.500 8.700z" fill="#2a2a2a"/><path d="M1 10l9 2.500l6-1.500v7l-6 2.500l-9-3.500z" fill="#cdcdcd"/><path d="M1 10l9 2.500v8L1 17z" fill="#e6e6e6"/><ellipse cx="3.800" cy="14.200" rx="1" ry="1.700" fill="#4a4a68"/><ellipse cx="7.600" cy="15.600" rx="1" ry="1.700" fill="#4a4a68"/></svg>
<svg class="a" style="left:816px;top:743px" width="14" height="9" viewBox="0 0 14 9"><path d="M1 7.500l6-6l6 6" fill="none" stroke="#fff" stroke-width="1.300"/></svg>
<svg class="a" style="left:841px;top:739px" width="13" height="17" viewBox="0 0 13 17"><path d="M2 4a2 2 0 0 1 2-2h4a2 2 0 0 1 2 2M2 13a2 2 0 0 0 2 2h4a2 2 0 0 0 2-2" fill="none" stroke="#fff" stroke-width="1.200"/><rect x="1" y="5.500" width="7" height="6" rx="1" fill="none" stroke="#fff" stroke-width="1.200"/><path d="M8.500 8l3-2v5l-3-2z" fill="none" stroke="#fff" stroke-width="1.100"/></svg>
<svg class="a" style="left:862px;top:741px" width="18" height="15" viewBox="0 0 18 15"><rect x="3.500" y="1.500" width="13" height="8.500" fill="none" stroke="#fff" stroke-width="1.200"/><path d="M10 10v3M6 13.500h8" stroke="#fff" stroke-width="1.200"/><rect x=".5" y="1" width="5" height="4" fill="#051b29" stroke="#fff" stroke-width="1"/><path d="M3 5v5h1" stroke="#fff" stroke-width="1" fill="none"/></svg>
<svg class="a" style="left:886px;top:740px" width="19" height="17" viewBox="0 0 19 17"><path d="M1 6h2.500l3.500-3.500v11L3.500 10H1z" fill="none" stroke="#fff" stroke-width="1.100"/><circle cx="12.500" cy="11.700" r="4.600" fill="#e81123"/><path d="M10.500 9.700l4 4M14.500 9.700l-4 4" stroke="#fff" stroke-width="1.300"/></svg>
<span class="t" style="left:917.0px;top:733.2px;font-size:12px;color:#fff;transform:scaleX(0.9766);transform-origin:0 0;">2:15 AM</span>
<span class="t" style="left:913.8px;top:751.2px;font-size:12px;color:#fff;transform:scaleX(0.9402);transform-origin:0 0;">5/25/2023</span>
<svg class="a" style="left:982px;top:740px" width="18" height="15" viewBox="0 0 18 15"><path d="M1 .5h15v10.500h-9l-3.500 3.500v-3.500H1z" fill="#fff"/><path d="M3.500 3.500h10M3.500 6h10M3.500 8.500h6" stroke="#051b29" stroke-width="1"/></svg>
<div class="a" style="left:990px;top:746px;width:17px;height:17px;border-radius:50%;background:#3d3d3d;border:1px solid #051b29;box-sizing:border-box"></div>
<span class="t" style="left:995.4px;top:749.2px;font-size:12px;color:#fff;font-weight:700;">1</span>
<div class="a" style="left:1019px;top:728px;width:1px;height:40px;background:#7a8892"></div>
</body></html>
